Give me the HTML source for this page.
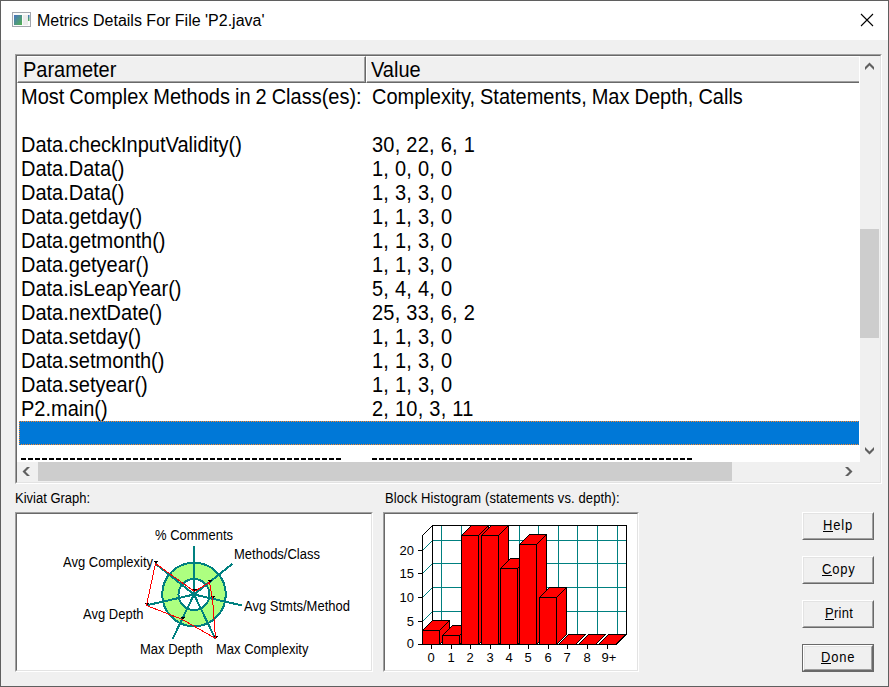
<!DOCTYPE html>
<html><head><meta charset="utf-8">
<style>
*{margin:0;padding:0;box-sizing:border-box}
html,body{width:889px;height:687px;overflow:hidden;background:#f0f0f0;font-family:"Liberation Sans",sans-serif;color:#000}
.a{position:absolute}
.t{position:absolute;white-space:pre;line-height:1}
.sunk{position:absolute;border-left:1px solid #a0a0a0;border-top:1px solid #a0a0a0;border-right:1px solid #fff;border-bottom:1px solid #fff}
.sunk>i{position:absolute;left:0;top:0;right:0;bottom:0;border-left:1px solid #696969;border-top:1px solid #696969;border-right:1px solid #e3e3e3;border-bottom:1px solid #e3e3e3;background:#fff}
.btn{position:absolute;width:72px;height:28px;background:#f0f0f0;border-left:1px solid #fff;border-top:1px solid #fff;border-right:1px solid #696969;border-bottom:1px solid #696969}
.btn>i{position:absolute;left:0;top:0;right:0;bottom:0;border-left:1px solid #e3e3e3;border-top:1px solid #e3e3e3;border-right:1px solid #a0a0a0;border-bottom:1px solid #a0a0a0}
</style></head><body>
<div class="a" style="left:0;top:0;width:889px;height:687px;border:1px solid #5f5f5f"></div>
<div class="a" style="left:1px;top:1px;width:887px;height:39px;background:#fff"></div>
<svg class="a" style="left:12px;top:12px" width="19" height="15" viewBox="0 0 19 15">
 <defs><linearGradient id="ig" x1="0" y1="0" x2="1" y2="1"><stop offset="0" stop-color="#4a74c4"/><stop offset="1" stop-color="#52b24e"/></linearGradient>
 <linearGradient id="ig2" x1="0" y1="0" x2="0" y2="1"><stop offset="0" stop-color="#4a74c4"/><stop offset="1" stop-color="#52b24e"/></linearGradient></defs>
 <rect x="0.5" y="0.5" width="18" height="14" fill="#fbfbfb" stroke="#a3a7ae"/>
 <rect x="2" y="3" width="8" height="10" fill="url(#ig)"/>
 <rect x="11" y="3" width="5" height="10" fill="#ebebeb"/>
 <rect x="16" y="3" width="1.5" height="6" fill="url(#ig2)"/>
</svg>
<div class="t" style="left:37px;top:13px;font-size:16px;">Metrics Details For File 'P2.java'</div>
<svg class="a" style="left:860px;top:13px" width="14" height="14" viewBox="0 0 14 14"><path d="M1 1 L13 13 M13 1 L1 13" stroke="#000" stroke-width="1.1" fill="none"/></svg>
<div class="sunk" style="left:15px;top:54px;width:867px;height:430px"><i></i></div>
<div class="a" style="left:17px;top:56px;width:349px;height:27px;background:#f0f0f0;border-left:1px solid #fff;border-top:1px solid #fff;border-right:1px solid #696969;border-bottom:1px solid #696969"><div class="a" style="left:0;top:0;right:0;bottom:0;border-right:1px solid #a0a0a0;border-bottom:1px solid #a0a0a0"></div></div>
<div class="a" style="left:366px;top:56px;width:493px;height:27px;background:#f0f0f0;border-left:1px solid #fff;border-top:1px solid #fff;border-bottom:1px solid #696969"><div class="a" style="left:0;top:0;right:0;bottom:0;border-bottom:1px solid #a0a0a0"></div></div>
<div class="t" style="left:23px;top:60px;font-size:20px;transform-origin:0 17px;transform:scaleY(1.07);">Parameter</div>
<div class="t" style="left:371px;top:60px;font-size:20px;transform-origin:0 17px;transform:scaleY(1.07);">Value</div>
<div class="t" style="left:21px;top:87px;font-size:20px;transform-origin:0 17px;transform:scaleY(1.07);word-spacing:-0.56px">Most Complex Methods in 2 Class(es):</div>
<div class="t" style="left:372px;top:87px;font-size:20px;transform-origin:0 17px;transform:scaleY(1.07);word-spacing:-0.56px">Complexity, Statements, Max Depth, Calls</div>
<div class="t" style="left:21px;top:135px;font-size:20px;transform-origin:0 17px;transform:scaleY(1.07);word-spacing:-0.56px">Data.checkInputValidity()</div>
<div class="t" style="left:372px;top:135px;font-size:20px;transform-origin:0 17px;transform:scaleY(1.07);letter-spacing:0.25px">30, 22, 6, 1</div>
<div class="t" style="left:21px;top:159px;font-size:20px;transform-origin:0 17px;transform:scaleY(1.07);word-spacing:-0.56px">Data.Data()</div>
<div class="t" style="left:372px;top:159px;font-size:20px;transform-origin:0 17px;transform:scaleY(1.07);letter-spacing:0.25px">1, 0, 0, 0</div>
<div class="t" style="left:21px;top:183px;font-size:20px;transform-origin:0 17px;transform:scaleY(1.07);word-spacing:-0.56px">Data.Data()</div>
<div class="t" style="left:372px;top:183px;font-size:20px;transform-origin:0 17px;transform:scaleY(1.07);letter-spacing:0.25px">1, 3, 3, 0</div>
<div class="t" style="left:21px;top:207px;font-size:20px;transform-origin:0 17px;transform:scaleY(1.07);word-spacing:-0.56px">Data.getday()</div>
<div class="t" style="left:372px;top:207px;font-size:20px;transform-origin:0 17px;transform:scaleY(1.07);letter-spacing:0.25px">1, 1, 3, 0</div>
<div class="t" style="left:21px;top:231px;font-size:20px;transform-origin:0 17px;transform:scaleY(1.07);word-spacing:-0.56px">Data.getmonth()</div>
<div class="t" style="left:372px;top:231px;font-size:20px;transform-origin:0 17px;transform:scaleY(1.07);letter-spacing:0.25px">1, 1, 3, 0</div>
<div class="t" style="left:21px;top:255px;font-size:20px;transform-origin:0 17px;transform:scaleY(1.07);word-spacing:-0.56px">Data.getyear()</div>
<div class="t" style="left:372px;top:255px;font-size:20px;transform-origin:0 17px;transform:scaleY(1.07);letter-spacing:0.25px">1, 1, 3, 0</div>
<div class="t" style="left:21px;top:279px;font-size:20px;transform-origin:0 17px;transform:scaleY(1.07);word-spacing:-0.56px">Data.isLeapYear()</div>
<div class="t" style="left:372px;top:279px;font-size:20px;transform-origin:0 17px;transform:scaleY(1.07);letter-spacing:0.25px">5, 4, 4, 0</div>
<div class="t" style="left:21px;top:303px;font-size:20px;transform-origin:0 17px;transform:scaleY(1.07);word-spacing:-0.56px">Data.nextDate()</div>
<div class="t" style="left:372px;top:303px;font-size:20px;transform-origin:0 17px;transform:scaleY(1.07);letter-spacing:0.25px">25, 33, 6, 2</div>
<div class="t" style="left:21px;top:327px;font-size:20px;transform-origin:0 17px;transform:scaleY(1.07);word-spacing:-0.56px">Data.setday()</div>
<div class="t" style="left:372px;top:327px;font-size:20px;transform-origin:0 17px;transform:scaleY(1.07);letter-spacing:0.25px">1, 1, 3, 0</div>
<div class="t" style="left:21px;top:351px;font-size:20px;transform-origin:0 17px;transform:scaleY(1.07);word-spacing:-0.56px">Data.setmonth()</div>
<div class="t" style="left:372px;top:351px;font-size:20px;transform-origin:0 17px;transform:scaleY(1.07);letter-spacing:0.25px">1, 1, 3, 0</div>
<div class="t" style="left:21px;top:375px;font-size:20px;transform-origin:0 17px;transform:scaleY(1.07);word-spacing:-0.56px">Data.setyear()</div>
<div class="t" style="left:372px;top:375px;font-size:20px;transform-origin:0 17px;transform:scaleY(1.07);letter-spacing:0.25px">1, 1, 3, 0</div>
<div class="t" style="left:21px;top:399px;font-size:20px;transform-origin:0 17px;transform:scaleY(1.07);word-spacing:-0.56px">P2.main()</div>
<div class="t" style="left:372px;top:399px;font-size:20px;transform-origin:0 17px;transform:scaleY(1.07);letter-spacing:0.25px">2, 10, 3, 11</div>
<div class="a" style="left:19px;top:421px;width:840px;height:24px;background:#0078d7"></div>
<div class="a" style="left:19px;top:421px;width:840px;height:1px;background:repeating-linear-gradient(90deg,#ff8728 0 1px,#0078d7 1px 2px)"></div>
<div class="a" style="left:19px;top:444px;width:840px;height:1px;background:repeating-linear-gradient(90deg,#ff8728 0 1px,#0078d7 1px 2px)"></div>
<div class="a" style="left:19px;top:421px;width:1px;height:24px;background:repeating-linear-gradient(180deg,#ff8728 0 1px,#0078d7 1px 2px)"></div>
<div class="a" style="left:21px;top:458px;width:322px;height:2px;background:repeating-linear-gradient(90deg,#000 0 5px,transparent 5px 7px)"></div>
<div class="a" style="left:372px;top:458px;width:322px;height:2px;background:repeating-linear-gradient(90deg,#000 0 5px,transparent 5px 7px)"></div>
<div class="a" style="left:860px;top:56px;width:20px;height:406px;background:#f0f0f0"></div>
<div class="a" style="left:860px;top:229px;width:19px;height:109px;background:#cdcdcd"></div>
<div class="a" style="left:17px;top:462px;width:863px;height:20px;background:#f0f0f0"></div>
<div class="a" style="left:38px;top:462px;width:694px;height:19px;background:#cdcdcd"></div>
<svg class="a" style="left:0;top:0" width="889" height="687"><path d="M865 70 L869.5 65.5 L874 70 L874 67 L869.5 62.5 L865 67 Z M865 447 L869.5 451.5 L874 447 L874 450 L869.5 454.5 L865 450 Z M30 467 L25.5 471.5 L30 476 L27 476 L22.5 471.5 L27 467 Z M845 467 L848 467 L852.5 471.5 L848 476 L845 476 L849.5 471.5 Z" fill="#606060"/></svg>
<div class="t" style="left:15px;top:492px;font-size:13px;transform-origin:0 11px;transform:scaleY(1.1);">Kiviat Graph:</div>
<div class="t" style="left:385px;top:492px;font-size:13px;transform-origin:0 11px;transform:scaleY(1.1);letter-spacing:0.11px">Block Histogram (statements vs. depth):</div>
<div class="sunk" style="left:15px;top:512px;width:358px;height:160px"><i></i></div>
<div class="sunk" style="left:383px;top:512px;width:256px;height:160px"><i></i></div>
<div class="btn" style="left:802px;top:512px"><i></i></div>
<div class="t" style="left:823px;top:519px;font-size:13px;transform-origin:0 11px;transform:scaleY(1.1);letter-spacing:0.8px">Help</div>
<div class="a" style="left:823px;top:531px;width:10px;height:1px;background:#000"></div>
<div class="btn" style="left:802px;top:556px"><i></i></div>
<div class="t" style="left:822px;top:563px;font-size:13px;transform-origin:0 11px;transform:scaleY(1.1);letter-spacing:0.8px">Copy</div>
<div class="a" style="left:822px;top:575px;width:10px;height:1px;background:#000"></div>
<div class="btn" style="left:802px;top:600px"><i></i></div>
<div class="t" style="left:825px;top:607px;font-size:13px;transform-origin:0 11px;transform:scaleY(1.1);letter-spacing:0.3px">Print</div>
<div class="a" style="left:825px;top:619px;width:9px;height:1px;background:#000"></div>
<div class="a" style="left:802px;top:644px;width:72px;height:28px;border:1px solid #696969"></div>
<div class="btn" style="left:803px;top:645px;width:70px;height:26px"><i></i></div>
<div class="t" style="left:821px;top:651px;font-size:13px;transform-origin:0 11px;transform:scaleY(1.1);letter-spacing:0.8px">Done</div>
<div class="a" style="left:821px;top:663px;width:10px;height:1px;background:#000"></div>
<svg class="a" style="left:0;top:0" width="889" height="687" viewBox="0 0 889 687" shape-rendering="crispEdges">
<circle cx="194" cy="594.5" r="31.8" fill="#adff80" stroke="#008080" stroke-width="2"/>
<circle cx="194" cy="594.5" r="15.5" fill="#fff" stroke="#008080" stroke-width="2"/>
<line x1="194" y1="594.5" x2="194.00" y2="545.50" stroke="#008080" stroke-width="2"/>
<line x1="194" y1="594.5" x2="232.31" y2="563.95" stroke="#008080" stroke-width="2"/>
<line x1="194" y1="594.5" x2="241.77" y2="605.40" stroke="#008080" stroke-width="2"/>
<line x1="194" y1="594.5" x2="215.26" y2="638.65" stroke="#008080" stroke-width="2"/>
<line x1="194" y1="594.5" x2="172.74" y2="638.65" stroke="#008080" stroke-width="2"/>
<line x1="194" y1="594.5" x2="146.23" y2="605.40" stroke="#008080" stroke-width="2"/>
<line x1="194" y1="594.5" x2="155.69" y2="563.95" stroke="#008080" stroke-width="2"/>
<path d="M192.5 589.0 h4 v1 h-1 v1 h-2 v-1 h-1 z" fill="#000"/>
<path d="M207.5 580.0 h4 v1 h-1 v1 h-2 v-1 h-1 z" fill="#000"/>
<path d="M210.5 596.0 h4 v1 h-1 v1 h-2 v-1 h-1 z" fill="#000"/>
<path d="M213.5 636.0 h4 v1 h-1 v1 h-2 v-1 h-1 z" fill="#000"/>
<path d="M180.5 617.0 h4 v1 h-1 v1 h-2 v-1 h-1 z" fill="#000"/>
<path d="M144.5 603.0 h4 v1 h-1 v1 h-2 v-1 h-1 z" fill="#000"/>
<path d="M153.5 561.0 h4 v1 h-1 v1 h-2 v-1 h-1 z" fill="#000"/>
<polygon points="194.50,591.50 209.50,582.50 212.50,598.50 215.50,638.50 182.50,619.50 146.50,605.50 155.50,563.50" fill="none" stroke="#ff0000" stroke-width="1"/>
</svg>
<div class="t" style="left:155px;top:529px;font-size:13px;transform-origin:0 11px;transform:scaleY(1.1);">% Comments</div>
<div class="t" style="left:234px;top:548px;font-size:13px;transform-origin:0 11px;transform:scaleY(1.1);">Methods/Class</div>
<div class="t" style="left:244px;top:600px;font-size:13px;transform-origin:0 11px;transform:scaleY(1.1);">Avg Stmts/Method</div>
<div class="t" style="left:216px;top:643px;font-size:13px;transform-origin:0 11px;transform:scaleY(1.1);">Max Complexity</div>
<div class="t" style="left:140px;top:643px;font-size:13px;transform-origin:0 11px;transform:scaleY(1.1);">Max Depth</div>
<div class="t" style="left:83px;top:608px;font-size:13px;transform-origin:0 11px;transform:scaleY(1.1);">Avg Depth</div>
<div class="t" style="left:63px;top:556px;font-size:13px;transform-origin:0 11px;transform:scaleY(1.1);">Avg Complexity</div>
<svg class="a" style="left:0;top:0" width="889" height="687" viewBox="0 0 889 687" shape-rendering="crispEdges">
<path d="M422.5 621.5 L432.5 611.5 H626.5" stroke="#008080" fill="none"/>
<path d="M422.5 597.5 L432.5 587.5 H626.5" stroke="#008080" fill="none"/>
<path d="M422.5 573.5 L432.5 563.5 H626.5" stroke="#008080" fill="none"/>
<path d="M422.5 550.5 L432.5 540.5 H626.5" stroke="#008080" fill="none"/>
<path d="M441.5 525.5 V634.5" stroke="#008080" fill="none"/>
<path d="M461.5 525.5 V634.5" stroke="#008080" fill="none"/>
<path d="M480.5 525.5 V634.5" stroke="#008080" fill="none"/>
<path d="M500.5 525.5 V634.5" stroke="#008080" fill="none"/>
<path d="M519.5 525.5 V634.5" stroke="#008080" fill="none"/>
<path d="M538.5 525.5 V634.5" stroke="#008080" fill="none"/>
<path d="M558.5 525.5 V634.5" stroke="#008080" fill="none"/>
<path d="M577.5 525.5 V634.5" stroke="#008080" fill="none"/>
<path d="M597.5 525.5 V634.5" stroke="#008080" fill="none"/>
<path d="M617.5 525.5 V634.5" stroke="#008080" fill="none"/>
<path d="M422.5 644.5 V535.5 L432.5 525.5 H626.5 V634.5 M432.5 525.5 V634.5" stroke="#000" fill="none"/>
<path d="M418 644.5 H616.5 L626.5 634.5" stroke="#000" fill="none"/>
<path d="M418 644.5 H422.5" stroke="#000"/>
<path d="M418 621.5 H422.5" stroke="#000"/>
<path d="M418 597.5 H422.5" stroke="#000"/>
<path d="M418 573.5 H422.5" stroke="#000"/>
<path d="M418 550.5 H422.5" stroke="#000"/>
<rect x="422.5" y="630.5" width="17" height="14.0" fill="#f00" stroke="#000"/>
<path d="M422.5 630.5 L432.5 620.5 H449.5 L439.5 630.5 Z" fill="#f00" stroke="#000"/>
<path d="M439.5 630.5 L449.5 620.5 V634.5 L439.5 644.5 Z" fill="#f00" stroke="#000"/>
<rect x="442.5" y="635.5" width="17" height="9.0" fill="#f00" stroke="#000"/>
<path d="M442.5 635.5 L452.5 625.5 H469.5 L459.5 635.5 Z" fill="#f00" stroke="#000"/>
<path d="M459.5 635.5 L469.5 625.5 V634.5 L459.5 644.5 Z" fill="#f00" stroke="#000"/>
<rect x="461.5" y="535.5" width="17" height="109.0" fill="#f00" stroke="#000"/>
<path d="M461.5 535.5 L471.5 525.5 H488.5 L478.5 535.5 Z" fill="#f00" stroke="#000"/>
<path d="M478.5 535.5 L488.5 525.5 V634.5 L478.5 644.5 Z" fill="#f00" stroke="#000"/>
<rect x="481.5" y="535.5" width="17" height="109.0" fill="#f00" stroke="#000"/>
<path d="M481.5 535.5 L491.5 525.5 H508.5 L498.5 535.5 Z" fill="#f00" stroke="#000"/>
<path d="M498.5 535.5 L508.5 525.5 V634.5 L498.5 644.5 Z" fill="#f00" stroke="#000"/>
<rect x="500.5" y="568.5" width="17" height="76.0" fill="#f00" stroke="#000"/>
<path d="M500.5 568.5 L510.5 558.5 H527.5 L517.5 568.5 Z" fill="#f00" stroke="#000"/>
<path d="M517.5 568.5 L527.5 558.5 V634.5 L517.5 644.5 Z" fill="#f00" stroke="#000"/>
<rect x="519.5" y="544.5" width="17" height="100.0" fill="#f00" stroke="#000"/>
<path d="M519.5 544.5 L529.5 534.5 H546.5 L536.5 544.5 Z" fill="#f00" stroke="#000"/>
<path d="M536.5 544.5 L546.5 534.5 V634.5 L536.5 644.5 Z" fill="#f00" stroke="#000"/>
<rect x="539.5" y="597.5" width="17" height="47.0" fill="#f00" stroke="#000"/>
<path d="M539.5 597.5 L549.5 587.5 H566.5 L556.5 597.5 Z" fill="#f00" stroke="#000"/>
<path d="M556.5 597.5 L566.5 587.5 V634.5 L556.5 644.5 Z" fill="#f00" stroke="#000"/>
<path d="M558.5 644.5 L568.5 634.5 H585.5 L575.5 644.5 Z" fill="#f00" stroke="#000"/>
<path d="M578.5 644.5 L588.5 634.5 H605.5 L595.5 644.5 Z" fill="#f00" stroke="#000"/>
<path d="M598.5 644.5 L608.5 634.5 H625.5 L615.5 644.5 Z" fill="#f00" stroke="#000"/>
<path d="M431.5 644.5 V648.5" stroke="#000"/>
<path d="M451.5 644.5 V648.5" stroke="#000"/>
<path d="M470.5 644.5 V648.5" stroke="#000"/>
<path d="M490.5 644.5 V648.5" stroke="#000"/>
<path d="M509.5 644.5 V648.5" stroke="#000"/>
<path d="M528.5 644.5 V648.5" stroke="#000"/>
<path d="M548.5 644.5 V648.5" stroke="#000"/>
<path d="M567.5 644.5 V648.5" stroke="#000"/>
<path d="M587.5 644.5 V648.5" stroke="#000"/>
<path d="M607.5 644.5 V648.5" stroke="#000"/>
</svg>
<div class="t" style="left:363px;width:51px;text-align:right;top:637px;font-size:13px">0</div>
<div class="t" style="left:363px;width:51px;text-align:right;top:615px;font-size:13px">5</div>
<div class="t" style="left:363px;width:51px;text-align:right;top:591px;font-size:13px">10</div>
<div class="t" style="left:363px;width:51px;text-align:right;top:567px;font-size:13px">15</div>
<div class="t" style="left:363px;width:51px;text-align:right;top:544px;font-size:13px">20</div>
<div class="t" style="left:411.0px;width:40px;text-align:center;top:651px;font-size:13px">0</div>
<div class="t" style="left:431.0px;width:40px;text-align:center;top:651px;font-size:13px">1</div>
<div class="t" style="left:450.0px;width:40px;text-align:center;top:651px;font-size:13px">2</div>
<div class="t" style="left:470.0px;width:40px;text-align:center;top:651px;font-size:13px">3</div>
<div class="t" style="left:489.0px;width:40px;text-align:center;top:651px;font-size:13px">4</div>
<div class="t" style="left:508.0px;width:40px;text-align:center;top:651px;font-size:13px">5</div>
<div class="t" style="left:528.0px;width:40px;text-align:center;top:651px;font-size:13px">6</div>
<div class="t" style="left:547.0px;width:40px;text-align:center;top:651px;font-size:13px">7</div>
<div class="t" style="left:567.0px;width:40px;text-align:center;top:651px;font-size:13px">8</div>
<div class="t" style="left:589.0px;width:40px;text-align:center;top:651px;font-size:13px">9+</div>
</body></html>
